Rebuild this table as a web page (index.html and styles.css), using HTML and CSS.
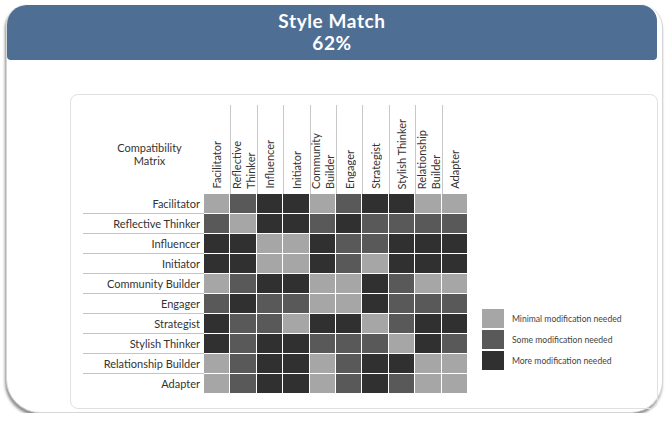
FILE: index.html
```html
<!DOCTYPE html>
<html>
<head>
<meta charset="utf-8">
<link rel="stylesheet" href="styles.css">
</head>
<body>
<div class="card">
  <div class="header">
    <div class="title">Style Match</div>
    <div class="title">62%</div>
  </div>
  <div class="panel">
    <div class="matrix">
      <div class="corner">Compatibility<br>Matrix</div>
      <div class="ch first"><span>Facilitator</span></div>
      <div class="ch"><span>Reflective<br>Thinker</span></div>
      <div class="ch"><span>Influencer</span></div>
      <div class="ch"><span>Initiator</span></div>
      <div class="ch"><span>Community<br>Builder</span></div>
      <div class="ch"><span>Engager</span></div>
      <div class="ch"><span>Strategist</span></div>
      <div class="ch"><span>Stylish Thinker</span></div>
      <div class="ch"><span>Relationship<br>Builder</span></div>
      <div class="ch"><span>Adapter</span></div>

      <div class="rl">Facilitator</div>
      <div class="c l"></div><div class="c m"></div><div class="c d"></div><div class="c d"></div><div class="c l"></div><div class="c m"></div><div class="c d"></div><div class="c d"></div><div class="c l"></div><div class="c l"></div>

      <div class="rl">Reflective Thinker</div>
      <div class="c m"></div><div class="c l"></div><div class="c d"></div><div class="c d"></div><div class="c m"></div><div class="c d"></div><div class="c m"></div><div class="c m"></div><div class="c m"></div><div class="c m"></div>

      <div class="rl">Influencer</div>
      <div class="c d"></div><div class="c d"></div><div class="c l"></div><div class="c l"></div><div class="c d"></div><div class="c m"></div><div class="c m"></div><div class="c d"></div><div class="c d"></div><div class="c d"></div>

      <div class="rl">Initiator</div>
      <div class="c d"></div><div class="c d"></div><div class="c l"></div><div class="c l"></div><div class="c d"></div><div class="c m"></div><div class="c l"></div><div class="c d"></div><div class="c d"></div><div class="c d"></div>

      <div class="rl">Community Builder</div>
      <div class="c l"></div><div class="c m"></div><div class="c d"></div><div class="c d"></div><div class="c l"></div><div class="c l"></div><div class="c d"></div><div class="c m"></div><div class="c l"></div><div class="c l"></div>

      <div class="rl">Engager</div>
      <div class="c m"></div><div class="c d"></div><div class="c m"></div><div class="c m"></div><div class="c l"></div><div class="c l"></div><div class="c d"></div><div class="c m"></div><div class="c m"></div><div class="c m"></div>

      <div class="rl">Strategist</div>
      <div class="c d"></div><div class="c m"></div><div class="c m"></div><div class="c l"></div><div class="c d"></div><div class="c d"></div><div class="c l"></div><div class="c m"></div><div class="c d"></div><div class="c d"></div>

      <div class="rl">Stylish Thinker</div>
      <div class="c d"></div><div class="c m"></div><div class="c d"></div><div class="c d"></div><div class="c m"></div><div class="c m"></div><div class="c m"></div><div class="c l"></div><div class="c d"></div><div class="c m"></div>

      <div class="rl">Relationship Builder</div>
      <div class="c l"></div><div class="c m"></div><div class="c d"></div><div class="c d"></div><div class="c l"></div><div class="c m"></div><div class="c d"></div><div class="c d"></div><div class="c l"></div><div class="c l"></div>

      <div class="rl last">Adapter</div>
      <div class="c l"></div><div class="c m"></div><div class="c d"></div><div class="c d"></div><div class="c l"></div><div class="c m"></div><div class="c d"></div><div class="c m"></div><div class="c l"></div><div class="c l"></div>
    </div>
    <div class="legend">
      <div class="li"><div class="sw l"></div><span>Minimal modification needed</span></div>
      <div class="li"><div class="sw m"></div><span>Some modification needed</span></div>
      <div class="li"><div class="sw d"></div><span>More modification needed</span></div>
    </div>
  </div>
</div>
</body>
</html>
```

FILE: styles.css
```css
* { box-sizing: border-box; }
html, body { margin: 0; padding: 0; background: #fff; }
body { padding: 4px 0 0 6px; font-family: Lato, "Open Sans", sans-serif; color: #333; }

.card {
  width: 657px;
  height: 409px;
  border: 1px solid #d6d6d6;
  border-top: none;
  border-radius: 22px 24px 32px 34px;
  box-shadow: -1px 3px 3px rgba(0,0,0,0.45);
  padding-top: 1px;
  background: #fff;
}

.header {
  width: 650px;
  height: 55px;
  background: #4e6e93;
  border-radius: 20px 16px 4px 4px;
  color: #fff;
  text-align: center;
  padding-top: 5px;
}
.title {
  font-weight: bold;
  font-size: 19px;
  line-height: 22px;
  letter-spacing: 0.6px;
}

.panel {
  margin: 34px 0 0 63px;
  width: 588px;
  height: 315px;
  border: 1px solid #e0e0e0;
  border-radius: 8px;
  padding: 10px 0 0 12px;
  display: flex;
}

.matrix {
  display: grid;
  grid-template-columns: 121px repeat(10, 26.4px);
  grid-template-rows: 89px repeat(10, 20px);
  font-size: 11px;
}

.corner {
  display: flex;
  align-items: center;
  justify-content: center;
  text-align: center;
  line-height: 13px;
  padding-left: 12px;
  padding-top: 9px;
}

.ch {
  border-left: 1px solid #c8c8c8;
  display: flex;
  align-items: flex-end;
  justify-content: center;
  padding-bottom: 5px;
}
.ch.first { border-left: none; }
.ch span {
  writing-mode: vertical-rl;
  transform: rotate(180deg);
  line-height: 14px;
  white-space: nowrap;
}

.rl {
  text-align: right;
  padding-right: 4px;
  line-height: 19px;
  border-bottom: 1px solid #c4c4c4;
  white-space: nowrap;
}
.rl.last { border-bottom: none; }

.c {
  border-right: 1px solid #fff;
  border-bottom: 1px solid #fff;
}
.l { background: #a6a6a6; }
.m { background: #595959; }
.d { background: #303030; }

.legend {
  margin-left: 14px;
  padding-top: 204px;
  display: flex;
  flex-direction: column;
  gap: 2px;
}
.li {
  display: flex;
  align-items: center;
  gap: 8px;
  font-size: 8.6px;
  color: #444;
}
.sw { width: 22px; height: 19px; }
```
